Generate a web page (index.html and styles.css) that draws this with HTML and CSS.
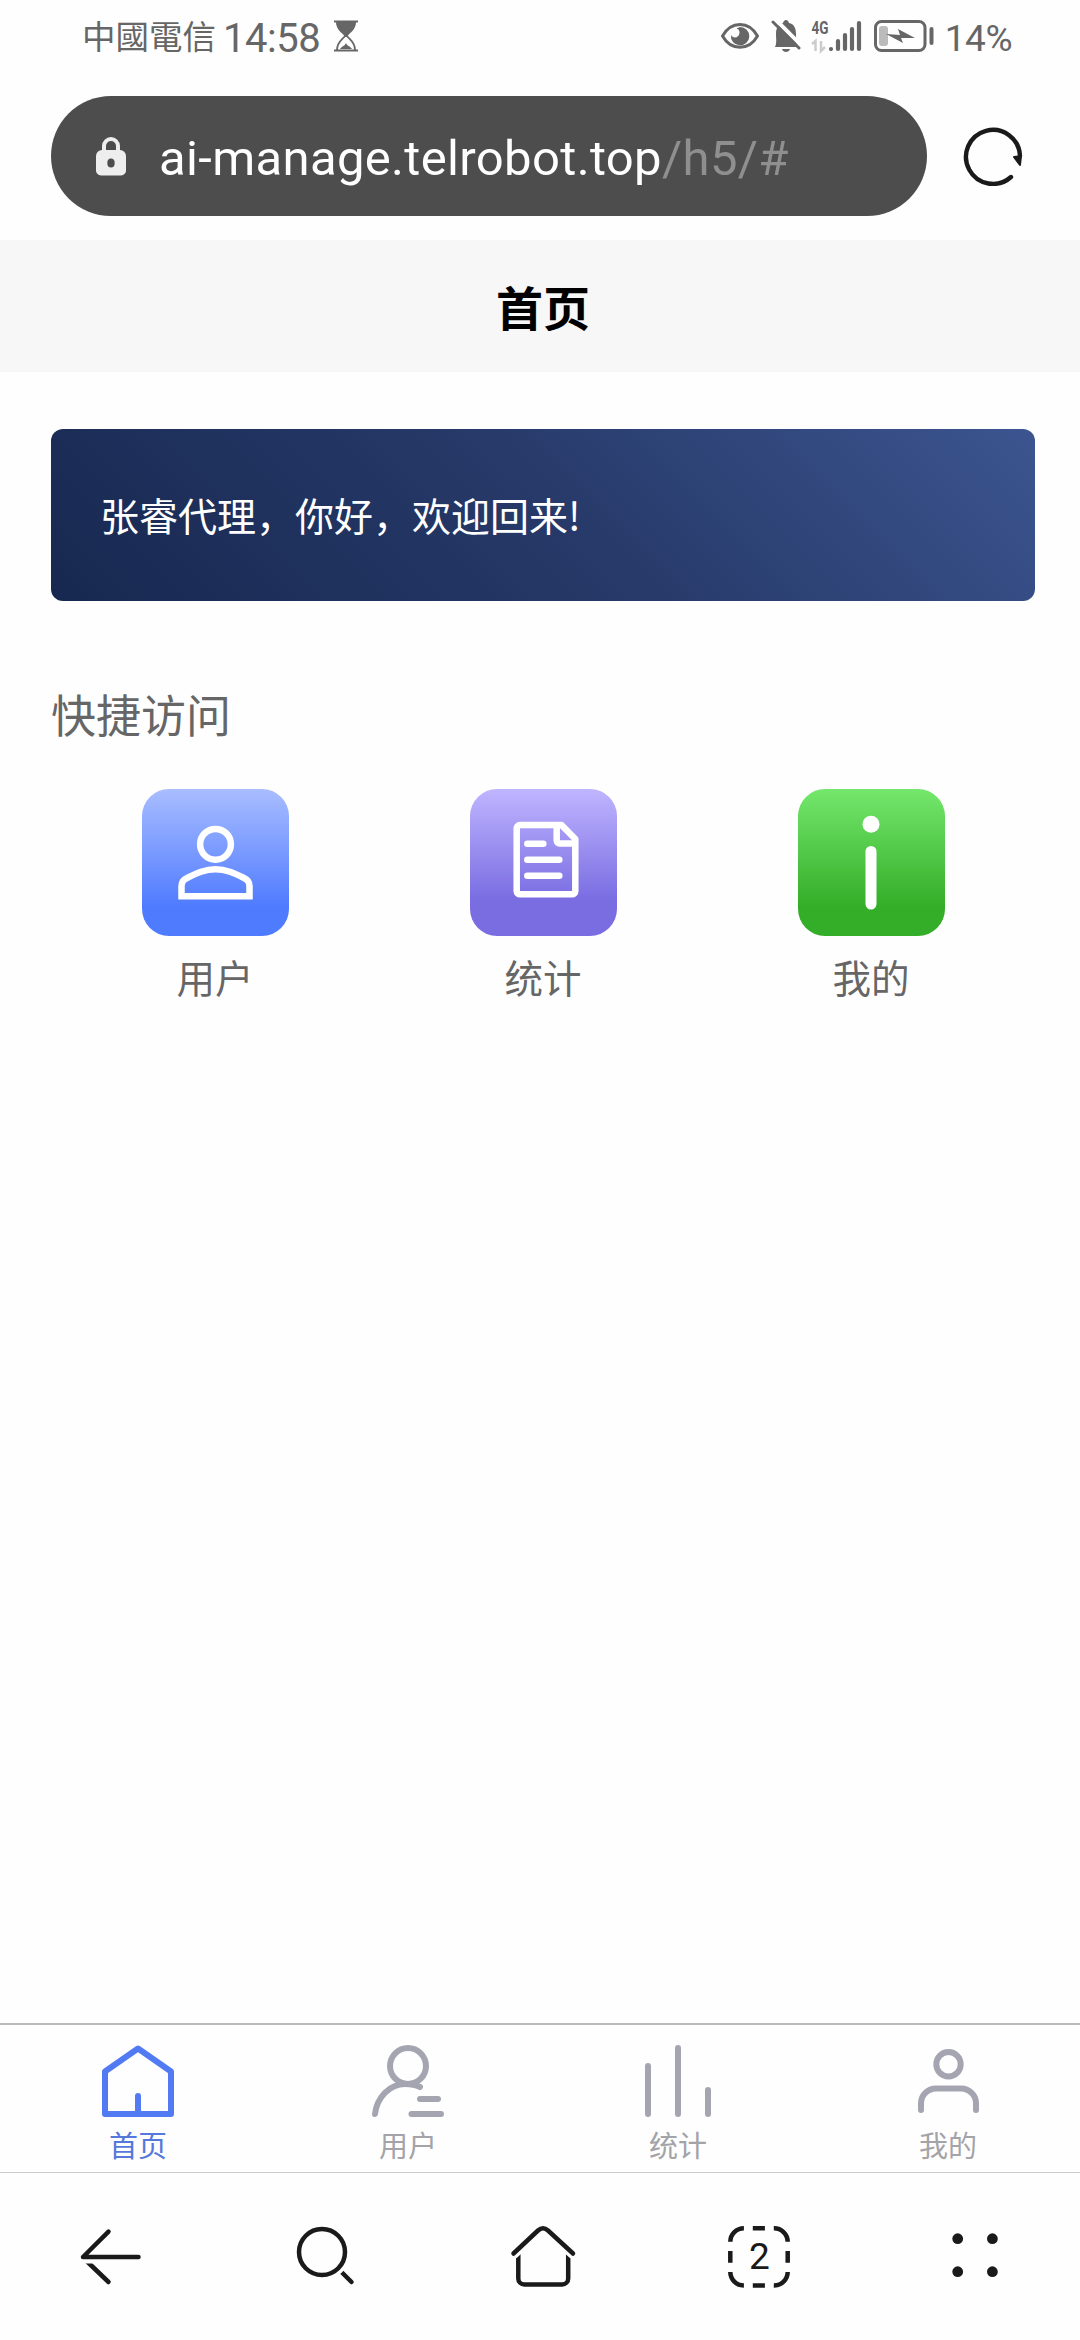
FILE: index.html
```html
<!DOCTYPE html>
<html lang="zh-CN">
<head>
    <meta charset="UTF-8">
    <meta name="viewport" content="width=device-width, initial-scale=1.0">
    <title>首页</title>
    <link rel="stylesheet" href="styles.css">
</head>
<body>
    <div class="status-bar">
        <span class="carrier" lang="zh-TW">中國電信</span>
        <span class="time">14:58</span>
        <svg class="hourglass" width="24" height="32" viewBox="0 0 24 32">
            <path d="M0 1.500H24M0 30.500H24" stroke="#666" stroke-width="2"/>
            <path d="M2 2H22C22 9 17 12 13.500 16H10.500C7 12 2 9 2 2Z" fill="#666"/>
            <path d="M3 30C3 22 8 20 11 16H13C16 20 21 22 21 30" fill="none" stroke="#666" stroke-width="1.800"/>
            <path d="M6 29C8 26 11 26 12 23C13 26 16 26 18 29Z" fill="#666"/>
        </svg>
        <div class="status-icons">
            <svg width="38" height="28" viewBox="0 0 38 28">
                <path d="M1.500 14C10 -1.500 28 -1.500 36.500 14C28 29 10 29 1.500 14Z" fill="none" stroke="#666" stroke-width="3" stroke-linejoin="round"/>
                <path d="M19 5A9.200 9.200 0 1 1 10 13C12 17 18 16 18.500 11C18.700 8 17 7 15.500 6.500Z" fill="#666"/>
            </svg>
            <svg class="bell" width="30" height="34" viewBox="0 0 30 34">
                <path d="M4 28C6 24 5 20 5 15C5 8 8 5 12 4C13 0 17 0 18 4C23 5 25 9 25 15C25 20 25 24 27 28Z" fill="#666"/>
                <path d="M11 30H19C18 34 12 34 11 30Z" fill="#666"/>
                <path d="M4 0L32 28" stroke="#fff" stroke-width="4"/>
                <path d="M2 3L28 29" stroke="#666" stroke-width="3" stroke-linecap="round"/>
            </svg>
            <svg class="signal" width="51" height="40" viewBox="0 -3 51 40">
                <text class="net-type" x="0.500" y="15" textLength="17" lengthAdjust="spacingAndGlyphs">4G</text>
                <path d="M1 25L4.500 22V32M10 22V32L14 28" fill="none" stroke="#ccc" stroke-width="2.500"/>
                <path d="M20 30V30.100M27 22V30M34 16V30M41 10V30M48 4V30" stroke="#666" stroke-width="4.200" stroke-linecap="round"/>
            </svg>
            <svg class="battery" width="60" height="32" viewBox="0 0 60 32">
                <rect x="1.500" y="1.500" width="49.500" height="29" rx="6" fill="none" stroke="#666" stroke-width="3"/>
                <rect x="5" y="6" width="9" height="20" rx="3" fill="#bbb"/>
                <path d="M12 14L26 15L24 9L41 18L27 18L29 23Z" fill="#666"/>
                <path d="M57.500 9V23" stroke="#666" stroke-width="4" stroke-linecap="round"/>
            </svg>
            <span class="percent">14%</span>
        </div>
    </div>

    <div class="address-row">
        <div class="address">
            <svg class="lock" width="30" height="40" viewBox="0 0 30 40">
                <path d="M8 16V10A7 7 0 0 1 22 10V16" fill="none" stroke="#eee" stroke-width="4"/>
                <path d="M6 14H24A6 6 0 0 1 30 20V34A5 5 0 0 1 25 39.500H5A5 5 0 0 1 0 34V20A6 6 0 0 1 6 14Z" fill="#eee"/>
                <ellipse cx="15" cy="27" rx="3.700" ry="4.500" fill="#4d4d4d"/>
            </svg>
            <span class="url">ai-manage.telrobot.top</span><span class="path">/h5/#</span>
        </div>
        <svg class="refresh" width="60" height="60" viewBox="0 0 60 60">
            <path d="M48 51A27 27 0 1 1 57 30" fill="none" stroke="#1a1a1a" stroke-width="4.400" stroke-linecap="round"/>
            <path d="M51 31L58 30L57 39Z" fill="#1a1a1a" stroke="#1a1a1a" stroke-width="2" stroke-linejoin="round"/>
        </svg>
    </div>

    <h1 class="page-title">首页</h1>

    <main class="content">
        <div class="welcome">张睿代理，你好，欢迎回来!</div>
        <h2>快捷访问</h2>
        <div class="shortcuts">
            <div class="shortcut">
                <svg class="tile tile-blue" viewBox="0 0 147 147">
                    <circle cx="73.500" cy="55.300" r="15.400"/>
                    <path d="M39.500 107.200V97C39.500 93 41.500 90.500 45 89C55 84 63 80.200 73.500 80.200C84 80.200 92 84 102 89C105.500 90.500 107.500 93 107.500 97V107.200Z" stroke-linejoin="miter"/>
                </svg>
                <span>用户</span>
            </div>
            <div class="shortcut">
                <svg class="tile tile-purple" viewBox="0 0 147 147">
                    <path d="M50 36H91.500L105.300 50V102A3.300 3.300 0 0 1 102 105.300H50A3.300 3.300 0 0 1 46.700 102V39.300A3.300 3.300 0 0 1 50 36Z"/>
                    <path d="M86.700 37V51.500A3 3 0 0 0 89.700 54.500H104"/>
                    <path d="M57.300 54.700H73.300M57.300 70.700H89.300M57.300 86.700H89.300"/>
                </svg>
                <span>统计</span>
            </div>
            <div class="shortcut">
                <svg class="tile tile-green" viewBox="0 0 147 147">
                    <circle cx="73" cy="35.300" r="8.500" fill="#fff" stroke="none"/>
                    <path d="M73 62.500V115" stroke-width="11"/>
                </svg>
                <span>我的</span>
            </div>
        </div>
    </main>

    <nav class="tabbar">
        <div class="tab active">
            <svg viewBox="0 0 80 80"><path d="M40 7.500L73 30.500V73H7V30.500ZM40 55V73"/></svg>
            <span>首页</span>
        </div>
        <div class="tab">
            <svg viewBox="0 0 80 80"><circle cx="40" cy="25" r="18"/><path d="M7 73C9 56 22 43 37 43Q46 43 52 46M52 58H70M43.500 73H73"/></svg>
            <span>用户</span>
        </div>
        <div class="tab">
            <svg viewBox="0 0 80 80"><path d="M10 25V73M40 7V73M70 49V73"/></svg>
            <span>统计</span>
        </div>
        <div class="tab">
            <svg viewBox="0 0 80 80"><circle cx="40.500" cy="23.300" r="12.200"/><path d="M13 69V62.500A15 15 0 0 1 28 47.500H53A15 15 0 0 1 68 62.500V69"/></svg>
            <span>我的</span>
        </div>
    </nav>

    <nav class="browser-nav">
        <svg viewBox="0 0 80 80">
            <path d="M14 43.500L37.500 66"/>
            <path class="gap" d="M12 42H67.500"/>
            <path d="M67.500 41H12L37.500 15.700"/>
        </svg>
        <svg viewBox="0 0 80 80">
            <path d="M52 53.500L64.500 66"/>
            <circle class="gap" cx="35" cy="36" r="23"/>
            <circle cx="35" cy="36" r="23"/>
        </svg>
        <svg viewBox="0 0 80 80">
            <path d="M15.300 37V62.500A6 6 0 0 0 21.300 68.500H59.200A6 6 0 0 0 65.200 62.500V37"/>
            <path class="gap" d="M10.500 37.500L35 14.500Q40 10 45 14.500L70 37.500"/>
            <path d="M10.500 37.500L35 14.500Q40 10 45 14.500L70 37.500"/>
        </svg>
        <svg viewBox="0 0 80 80">
            <path class="dashes" d="M11.300 25.700A13.600 13.600 0 0 1 24.900 12.300M54.800 12.300A13.600 13.600 0 0 1 68.700 25.700M68.700 56A13.600 13.600 0 0 1 54.800 69.500M24.900 69.500A13.600 13.600 0 0 1 11.300 56M33.800 12.300H45.900M33.800 69.500H45.900M11.300 35V46.700M68.700 35V46.700"/>
            <text class="tab-count" x="40.500" y="53" text-anchor="middle">2</text>
        </svg>
        <svg viewBox="0 0 80 80"><g class="dots"><circle cx="22.700" cy="22.700" r="5.400"/><circle cx="57.400" cy="22.700" r="5.400"/><circle cx="22.700" cy="55.700" r="5.400"/><circle cx="57.400" cy="55.700" r="5.400"/></g></svg>
    </nav>
</body>
</html>
```
FILE: styles.css
```css
* {
    box-sizing: border-box;
}
body {
    margin: 0;
    width: 1080px;
    height: 2340px;
    display: flex;
    flex-direction: column;
    overflow: hidden;
    background-color: #fefefe;
    color: #666;
    font-family: "Noto Sans CJK SC", sans-serif;
}
svg {
    display: block;
    flex: none;
}

/* phone status bar */
.status-bar {
    height: 96px;
    padding: 0 68px 24px 82px;
    display: flex;
    align-items: center;
    font-family: Roboto, sans-serif;
}
.carrier {
    margin-bottom: 2px;
    font-family: "Noto Sans CJK TC", sans-serif;
    font-size: 33.5px;
    line-height: 40px;
}
.time {
    margin: 4px 0 0 7px;
    font-size: 40px;
    letter-spacing: -0.5px;
}
.hourglass {
    margin-left: 14px;
}
.status-icons {
    margin-left: auto;
    display: flex;
    align-items: center;
}
.bell {
    margin-left: 12px;
}
.signal {
    margin-left: 10px;
}
.net-type {
    font: bold 19px Roboto, sans-serif;
    fill: #666;
}
.battery {
    margin-left: 12px;
}
.percent {
    margin: 4px 0 0 11px;
    font-size: 37px;
    letter-spacing: -0.5px;
}

/* address bar */
.address-row {
    height: 144px;
    padding: 0 57px 24px 51px;
    display: flex;
    justify-content: space-between;
    align-items: center;
}
.address {
    width: 876px;
    height: 120px;
    padding-left: 45px;
    display: flex;
    align-items: center;
    border-radius: 60px;
    background-color: #4d4d4d;
    color: #fff;
    font-family: Roboto, sans-serif;
    font-size: 49px;
    letter-spacing: 0.35px;
}
.url {
    margin: 5px 0 0 33px;
}
.path {
    margin-top: 5px;
    color: #8f8f8f;
}

.page-title {
    margin: 0;
    height: 132px;
    padding: 0 0 0 6px;
    background-color: #f7f7f7;
    color: #000;
    font-size: 47px;
    line-height: 131px;
    text-align: center;
}

.content {
    flex: 1;
    padding: 57px 45px 0 51px;
}
.welcome {
    height: 172px;
    padding-left: 49px;
    border-radius: 12px;
    background: linear-gradient(45deg, #172850, #263968 50%, #3c5590);
    color: #fff;
    font-size: 39px;
    line-height: 171px;
}
h2 {
    margin: 83px 0 0;
    font-size: 45px;
    font-weight: 400;
    line-height: 60px;
}
.shortcuts {
    margin-top: 45px;
    display: grid;
    grid-template-columns: repeat(3, 1fr);
}
.shortcut {
    display: flex;
    flex-direction: column;
    align-items: center;
    font-size: 38.5px;
    line-height: 50px;
}
.tile {
    width: 147px;
    height: 147px;
    margin-bottom: 15px;
    border-radius: 27px;
    fill: none;
    stroke: #fff;
    stroke-width: 6.5;
    stroke-linecap: round;
    stroke-linejoin: round;
}
.tile-blue {
    background: linear-gradient(#a9bdff, #4f7bff 80%);
}
.tile-purple {
    background: linear-gradient(#bfb5ff, #7a6de2 75%);
}
.tile-green {
    background: linear-gradient(#74e76c, #34ae29 80%);
}

/* app tabs */
.tabbar {
    height: 150px;
    padding: 16px 0 0 3px;
    display: grid;
    grid-template-columns: repeat(4, 270px);
    border-top: 2px solid #bbb;
    border-bottom: 1px solid #ccc;
}
.tab {
    display: flex;
    flex-direction: column;
    align-items: center;
    color: #a3a3a8;
    font-size: 29px;
    line-height: 40px;
}
.tab svg {
    width: 80px;
    height: 80px;
    margin-bottom: 3px;
    fill: none;
    stroke: #a5a5b2;
    stroke-width: 6;
    stroke-linecap: round;
    stroke-linejoin: round;
}
.tab.active {
    color: #5578da;
}
.tab.active svg {
    stroke: #527af3;
}

/* browser toolbar */
.browser-nav {
    height: 167px;
    padding: 43px 0 0 3px;
    display: grid;
    grid-template-columns: repeat(5, 216px);
    justify-items: center;
}
.browser-nav svg {
    width: 80px;
    height: 80px;
    fill: none;
    stroke: #1a1a1a;
    stroke-width: 4.5;
    stroke-linecap: round;
    stroke-linejoin: round;
}
.browser-nav .gap {
    stroke: #fefefe;
    stroke-width: 11;
}
.browser-nav .dashes {
    stroke-linecap: butt;
}
.tab-count {
    font: 37px Roboto, sans-serif;
    fill: #1a1a1a;
    stroke: none;
}
.dots {
    fill: #1a1a1a;
    stroke: none;
}
```
